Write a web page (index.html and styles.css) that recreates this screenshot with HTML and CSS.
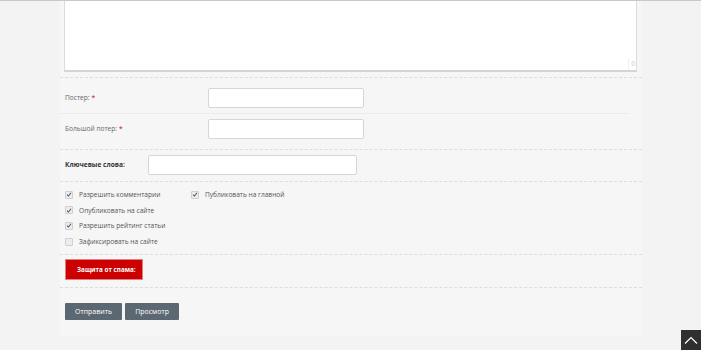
FILE: index.html
```html
<!DOCTYPE html>
<html lang="ru">
<head>
    <meta charset="UTF-8">
    <title>Добавить новость</title>
    <link rel="stylesheet" href="styles.css">
</head>
<body>
    <div class="page">
        <form class="addform">
            <div class="editor">
                <textarea class="editor-area"></textarea>
                <span class="counter">0</span>
            </div>

            <div class="section">
                <div class="row row-first">
                    <label class="label">Постер:<span class="req">*</span></label>
                    <input type="text" class="field">
                </div>
                <div class="row row-last">
                    <label class="label">Большой потер:<span class="req">*</span></label>
                    <input type="text" class="field">
                </div>
            </div>

            <div class="section section-keys">
                <label class="label label-bold">Ключевые слова:</label>
                <input type="text" class="field field-keys">
            </div>

            <div class="section section-checks">
                <div class="checks-col">
                    <label class="check"><span class="box"><svg width="7" height="7" viewBox="0 0 7 7"><path d="M1.2 3.6 L2.9 5.3 L5.9 1.4" fill="none" stroke="#555" stroke-width="1.2"/></svg></span>Разрешить комментарии</label>
                    <label class="check"><span class="box"><svg width="7" height="7" viewBox="0 0 7 7"><path d="M1.2 3.6 L2.9 5.3 L5.9 1.4" fill="none" stroke="#555" stroke-width="1.2"/></svg></span>Опубликовать на сайте</label>
                    <label class="check"><span class="box"><svg width="7" height="7" viewBox="0 0 7 7"><path d="M1.2 3.6 L2.9 5.3 L5.9 1.4" fill="none" stroke="#555" stroke-width="1.2"/></svg></span>Разрешить рейтинг статьи</label>
                    <label class="check"><span class="box"></span>Зафиксировать на сайте</label>
                </div>
                <div class="checks-col">
                    <label class="check"><span class="box"><svg width="7" height="7" viewBox="0 0 7 7"><path d="M1.2 3.6 L2.9 5.3 L5.9 1.4" fill="none" stroke="#555" stroke-width="1.2"/></svg></span>Публиковать на главной</label>
                </div>
            </div>

            <div class="section section-spam">
                <div class="spam">Защита от спама:</div>
            </div>

            <div class="section actions">
                <button type="button" class="btn">Отправить</button>
                <button type="button" class="btn">Просмотр</button>
            </div>
        </form>
    </div>

    <a href="#" class="to-top">
        <svg width="14" height="8" viewBox="0 0 14 8"><path d="M1 7.5 L7 1.5 L13 7.5" fill="none" stroke="#fff" stroke-width="1.2"/></svg>
    </a>
</body>
</html>
```

FILE: styles.css
```css
* {
    margin: 0;
    padding: 0;
    box-sizing: border-box;
}

body {
    font-family: 'Open Sans', 'DejaVu Sans', sans-serif;
    font-size: 6.6px;
    color: #555;
    background-color: #f3f3f3;
    border-top: 1px solid #c8c8c8;
    height: 350px;
    overflow: hidden;
}

.page {
    padding-left: 60px;
}

.addform {
    width: 582px;
    height: 335px;
    background-color: #f6f6f6;
}

.editor {
    position: relative;
    height: 76px;
    padding-left: 4px;
}

.editor-area {
    display: block;
    width: 573px;
    height: 71px;
    border: 1px solid #dcdcdc;
    border-top: none;
    border-bottom: 2px solid #d4d4d4;
    background-color: #fff;
    resize: none;
}

.counter {
    position: absolute;
    left: 568px;
    top: 57px;
    width: 9px;
    height: 12px;
    line-height: 12px;
    text-align: center;
    color: #c8c8c8;
    font-size: 6.5px;
    border-left: 1px solid #f0f0f0;
}

.section {
    border-top: 1px dashed #ddd;
}

.row {
    display: flex;
    align-items: center;
    padding: 0 5px;
}

.row-first {
    height: 35px;
    padding-top: 4px;
}

.row-last {
    height: 36px;
    padding-bottom: 6px;
    border-top: 1px solid #ececec;
    margin-right: 12px;
}

.label {
    width: 143px;
    color: #666;
}

.req {
    color: #c00;
    margin-left: 2px;
}

.label-bold {
    width: 83px;
    font-weight: 700;
    color: #333;
}

.field {
    width: 156px;
    height: 20px;
    border: 1px solid #d6d6d6;
    border-radius: 2px;
    background-color: #fff;
}

.section-keys {
    display: flex;
    align-items: center;
    height: 32px;
    padding: 0 5px 2px;
}

.field-keys {
    width: 209px;
}

.section-checks {
    display: flex;
    height: 73px;
    padding: 5px 5px 0;
}

.checks-col {
    display: flex;
    flex-direction: column;
    width: 126px;
}

.check {
    display: flex;
    align-items: center;
    height: 15.6px;
    color: #555;
}

.box {
    display: flex;
    align-items: center;
    justify-content: center;
    width: 8px;
    height: 8px;
    margin-right: 6px;
    background-color: #ececec;
    border: 1px solid #d0d0d0;
    border-radius: 1px;
}

.section-spam {
    height: 33px;
    padding: 4px 5px 0;
}

.spam {
    width: 78px;
    height: 21px;
    line-height: 19px;
    padding-left: 11px;
    background-color: #cc0000;
    border: 1px solid #e08080;
    color: #fff;
    font-weight: 700;
    font-size: 6.3px;
    white-space: nowrap;
}

.actions {
    display: flex;
    gap: 3px;
    padding: 15px 5px 0;
}

.btn {
    height: 17px;
    padding: 0 10px;
    background-color: #5b6771;
    border: none;
    border-radius: 1px;
    color: #fff;
    font-family: 'Open Sans', 'DejaVu Sans', sans-serif;
    font-size: 7px;
    cursor: pointer;
}

.to-top {
    position: absolute;
    right: 0;
    top: 330px;
    width: 20px;
    height: 20px;
    display: flex;
    align-items: center;
    justify-content: center;
    background-color: #2f2f2f;
}
```
